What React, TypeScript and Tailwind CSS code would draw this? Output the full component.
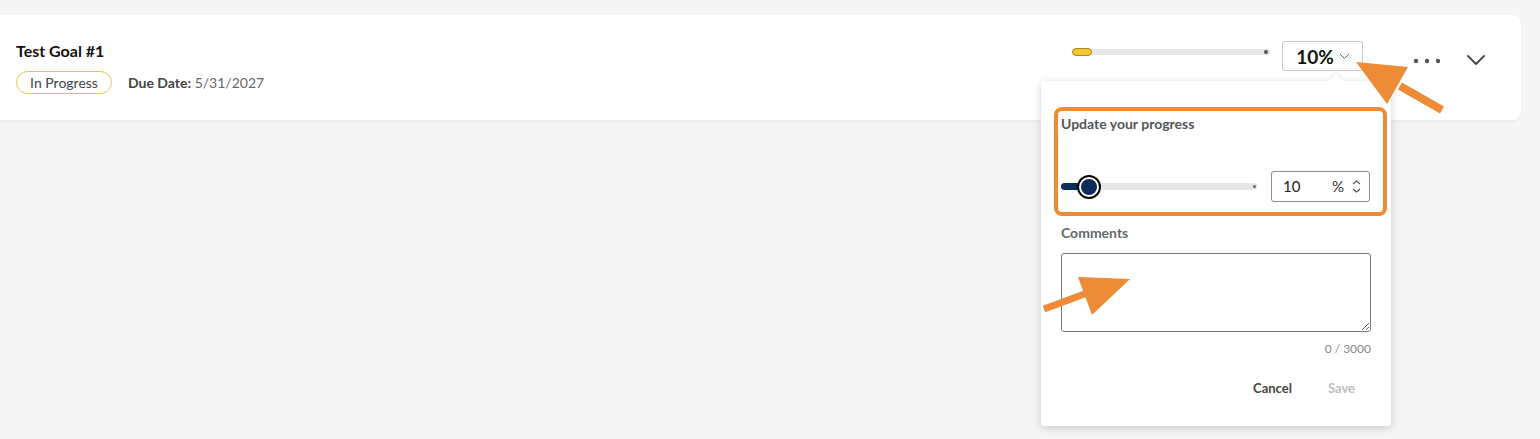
import React from "react";

const FONT = { fontFamily: "Lato, 'Open Sans', sans-serif" };

function Dots() {
  return (
    <svg width="28" height="6" viewBox="0 0 28 6" className="text-[#555]">
      <circle cx="3" cy="3" r="2.2" fill="currentColor" />
      <circle cx="14" cy="3" r="2.2" fill="currentColor" />
      <circle cx="25" cy="3" r="2.2" fill="currentColor" />
    </svg>
  );
}

function Chevron({ size = 18, stroke = 2, className = "" }: { size?: number; stroke?: number; className?: string }) {
  return (
    <svg width={size} height={size / 1.8} viewBox="0 0 18 10" fill="none" className={className}>
      <path d="M1 1l8 8 8-8" stroke="currentColor" strokeWidth={stroke} strokeLinecap="round" strokeLinejoin="round" />
    </svg>
  );
}

function Annotations() {
  return (
    <svg className="pointer-events-none absolute left-0 top-0 z-20" width="1540" height="439">
      {/* arrow to the 10% button */}
      <line x1="1442" y1="110" x2="1400" y2="86" stroke="#ee8b36" strokeWidth="8" />
      <polygon points="1356,62 1408,67 1387,104" fill="#ee8b36" />
      {/* arrow to the comments box */}
      <line x1="1044" y1="309" x2="1090" y2="292" stroke="#ee8b36" strokeWidth="7" />
      <polygon points="1130,279 1078,277 1092,315" fill="#ee8b36" />
    </svg>
  );
}

function ProgressPopover() {
  return (
    <div className="absolute right-[-28px] top-[40px] z-10 w-[350px] rounded-[3px] bg-white px-5 pb-[21px] pt-[34px] shadow-[0_2px_10px_rgba(0,0,0,0.18)]">
      {/* caret */}
      <div className="absolute right-[50px] top-[-5px] h-[10px] w-[10px] rotate-45 bg-white shadow-[-2px_-2px_3px_rgba(0,0,0,0.05)]" />
      {/* highlight box */}
      <div className="pointer-events-none absolute left-[13px] top-[26px] h-[109px] w-[333px] rounded-[8px] border-4 border-[#ee8b36]" />

      <div className="text-[14px] font-bold leading-[18px] text-[#555]">Update your progress</div>

      <div className="mt-[38px] flex items-center">
        <div className="relative h-[24px] w-[196px]">
          <div className="absolute left-0 right-0 top-[8px] h-[7px] rounded-full bg-[#e6e6e6]" />
          <div className="absolute left-0 top-[8px] h-[7px] w-[26px] rounded-l-full bg-[#0b2d58]" />
          <div className="absolute right-[1px] top-[10px] h-[3px] w-[3px] rounded-full bg-[#666]" />
          <div className="absolute left-[16px] top-0 flex h-[24px] w-[24px] items-center justify-center rounded-full border-2 border-black bg-white">
            <div className="h-[16px] w-[16px] rounded-full bg-[#0b2d58]" />
          </div>
        </div>
        <div className="ml-[14px] flex h-[31px] w-[99px] items-center rounded-[3px] border border-[#8a8a8a] pl-[11px] pr-[8px]">
          <span className="text-[15px] text-[#222]">10</span>
          <span className="ml-auto text-[15px] text-[#333]">%</span>
          <span className="ml-[8px] flex flex-col items-center gap-[3px] text-[#555]">
            <svg width="9" height="5" viewBox="0 0 9 5" fill="none">
              <path d="M1 4l3.5-3 3.5 3" stroke="currentColor" strokeWidth="1.2" />
            </svg>
            <svg width="9" height="5" viewBox="0 0 9 5" fill="none">
              <path d="M1 1l3.5 3 3.5-3" stroke="currentColor" strokeWidth="1.2" />
            </svg>
          </span>
        </div>
      </div>

      <div className="mt-[22px] text-[14px] font-bold leading-[18px] text-[#666]">Comments</div>
      <textarea
        className="mt-[11px] block h-[79px] w-[310px] rounded-[3px] border border-[#7a7a7a] bg-white"
        defaultValue=""
      />
      <div className="mt-[9px] w-[310px] text-right text-[12px] leading-[16px] text-[#888]">0 / 3000</div>

      <div className="mt-[16px] flex w-[310px] justify-end gap-[8px] pr-[2px]">
        <button className="px-[14px] py-[6px] text-[13px] font-bold text-[#444]">Cancel</button>
        <button className="px-[14px] py-[6px] text-[13px] font-bold text-[#bdbdbd]">Save</button>
      </div>
    </div>
  );
}

export default function App() {
  return (
    <div className="relative h-[439px] w-[1540px] overflow-hidden bg-[#f5f5f5]" style={FONT}>
      <div className="pr-[19px] pt-[15px]">
        <div className="flex h-[105px] items-start justify-between rounded-r-[8px] bg-white pl-4 pr-[36px] pt-[26px] shadow-[0_1px_3px_rgba(0,0,0,0.06)]">
          <div>
            <div className="text-[16px] font-bold leading-[20px] text-[#111]">Test Goal #1</div>
            <div className="mt-[10px] flex items-center">
              <span className="flex h-[23px] w-[96px] items-center justify-center rounded-full border border-[#e3c649] text-[14px] text-[#444]">
                In Progress
              </span>
              <span className="ml-4 text-[14px] text-[#666]">
                <span className="font-bold text-[#444]">Due Date:</span> 5/31/2027
              </span>
            </div>
          </div>

          <div className="flex items-start">
            <div className="relative mt-[8px] h-[6px] w-[198px] rounded-full bg-[#e6e6e6]">
              <div className="absolute left-0 top-[-1px] h-[8px] w-[20px] rounded-full border border-[#a88a1c] bg-[#f3c733]" />
              <div className="absolute right-[2px] top-[1px] h-[4px] w-[4px] rounded-full bg-[#555]" />
            </div>
            <div className="relative ml-3">
              <button className="flex h-[30px] w-[81px] items-center justify-center gap-[6px] rounded-[3px] border border-[#c8c8c8] bg-white">
                <span className="text-[19px] font-bold leading-none text-[#111]">10%</span>
                <Chevron size={9} stroke={1.6} className="text-[#333]" />
              </button>
              <ProgressPopover />
            </div>
            <div className="ml-[50px] mt-[17px]">
              <Dots />
            </div>
            <div className="ml-[26px] mt-[14px]">
              <Chevron size={18} stroke={1.8} className="text-[#444]" />
            </div>
          </div>
        </div>
      </div>
      <Annotations />
    </div>
  );
}
